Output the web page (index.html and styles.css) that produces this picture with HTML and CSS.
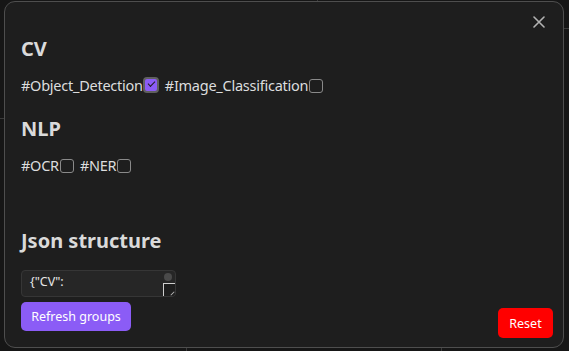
FILE: index.html
```html
<!DOCTYPE html>
<html lang="en">
<head>
    <meta charset="UTF-8">
    <meta name="viewport" content="width=device-width, initial-scale=1.0">
    <title>Tag groups</title>
    <link rel="stylesheet" href="styles.css">
</head>
<body>
    <div class="backdrop">
        <span class="grid-line h" style="top: 118px; left: 0; width: 6px;"></span>
        <span class="grid-line h" style="top: 28px; right: 0; width: 8px;"></span>
        <span class="grid-line v" style="left: 317px; top: 0; height: 3px;"></span>
        <span class="grid-line v" style="left: 186px; bottom: 0; height: 5px;"></span>
        <span class="grid-line v" style="left: 441px; bottom: 0; height: 5px;"></span>
    </div>

    <div class="modal">
        <button class="modal-close" aria-label="Close">
            <svg width="12" height="12" viewBox="0 0 12 12">
                <path d="M1 1 L11 11 M11 1 L1 11" stroke="currentColor" stroke-width="1.6" stroke-linecap="round"/>
            </svg>
        </button>

        <div class="group">
            <h2 class="group-title">CV</h2>
            <div class="tag-row">
                <label class="tag">#Object_Detection<span class="check checked"></span></label>
                <label class="tag">#Image_Classification<span class="check"></span></label>
            </div>
        </div>

        <div class="group">
            <h2 class="group-title nlp">NLP</h2>
            <div class="tag-row">
                <label class="tag">#OCR<span class="check"></span></label>
                <label class="tag">#NER<span class="check"></span></label>
            </div>
        </div>

        <h2 class="group-title json">Json structure</h2>
        <div class="json-box">
            <div class="json-text">{"CV":</div>
            <span class="scroll-thumb"></span>
            <span class="resizer"></span>
        </div>

        <div class="modal-footer">
            <button class="button refresh">Refresh groups</button>
            <button class="button reset">Reset</button>
        </div>
    </div>
</body>
</html>
```

FILE: styles.css
```css
body {
    margin: 0;
    width: 569px;
    height: 351px;
    overflow: hidden;
    background-color: #161616;
    font-family: 'Noto Sans', 'Open Sans', sans-serif;
    color: #dcddde;
    position: relative;
}

.backdrop {
    position: absolute;
    inset: 0;
}

.grid-line {
    position: absolute;
    background-color: #3a3a3a;
}

    .grid-line.h {
        height: 1px;
    }

    .grid-line.v {
        width: 1px;
    }

.modal {
    position: absolute;
    left: 4px;
    top: 1px;
    width: 560px;
    height: 347px;
    box-sizing: border-box;
    background-color: #1e1e1e;
    border: 1px solid #4e4e4e;
    border-radius: 11px;
    padding: 0 16px;
    display: flex;
    flex-direction: column;
}

.modal-close {
    position: absolute;
    top: 14px;
    right: 18px;
    background: none;
    border: none;
    padding: 0;
    color: #b3b3b3;
    display: flex;
    cursor: pointer;
}

.group-title {
    margin: 34px 0 0;
    font-size: 20px;
    line-height: 26px;
    font-weight: 700;
    color: #dadada;
}

    .group-title.nlp {
        margin-top: 20px;
    }

    .group-title.json {
        margin-top: 52px;
    }

.tag-row {
    display: flex;
    gap: 6px;
    margin-top: 12px;
}

.tag {
    display: flex;
    align-items: center;
    font-size: 14.5px;
    line-height: 22px;
    letter-spacing: -0.25px;
    color: #dcddde;
}

.check {
    width: 12px;
    height: 12px;
    border: 1px solid #8a8a8a;
    border-radius: 3px;
    margin-left: 1px;
    position: relative;
    top: 1px;
}

    .check.checked {
        width: 12px;
        height: 12px;
        background-color: #8b5cf6;
        border: 2px solid #5f5f5f;
        border-radius: 4px;
        margin-left: 0;
        top: 0;
    }

        .check.checked::after {
            content: '';
            position: absolute;
            left: 3px;
            top: 2px;
            width: 6px;
            height: 3px;
            border-left: 1.6px solid #1e1e1e;
            border-bottom: 1.6px solid #1e1e1e;
            transform: rotate(-45deg);
        }

.json-box {
    margin-top: 16px;
    width: 155px;
    height: 27px;
    box-sizing: border-box;
    background-color: #262626;
    border: 1px solid #363636;
    border-radius: 4px;
    position: relative;
    overflow: hidden;
}

.json-text {
    padding: 2px 0 0 8px;
    font-size: 12.5px;
    line-height: 18px;
    color: #e6e6e6;
    white-space: nowrap;
}

.scroll-thumb {
    position: absolute;
    top: 2px;
    right: 3px;
    width: 8px;
    height: 8px;
    border-radius: 50%;
    background-color: #4a4a4a;
}

.resizer {
    position: absolute;
    right: -1px;
    bottom: -1px;
    width: 12px;
    height: 13px;
    border: 1px solid #cfcfcf;
    border-right: none;
    border-bottom: none;
    background-color: #1e1e1e;
}

    .resizer::after {
        content: '';
        position: absolute;
        right: 1px;
        bottom: 3px;
        width: 5px;
        height: 1px;
        background-color: #bbb;
        transform: rotate(-45deg);
    }

.modal-footer {
    display: flex;
    justify-content: space-between;
    align-items: flex-start;
    margin-top: 5px;
    margin-right: -6px;
}

.button {
    border: none;
    border-radius: 5px;
    color: #fff;
    font-family: 'Noto Sans', 'Open Sans', sans-serif;
    font-size: 12.5px;
    cursor: pointer;
}

.refresh {
    background-color: #8b5cf6;
    width: 110px;
    height: 29px;
}

.reset {
    background-color: #ff0000;
    width: 55px;
    height: 30px;
    margin-top: 6px;
}
```
